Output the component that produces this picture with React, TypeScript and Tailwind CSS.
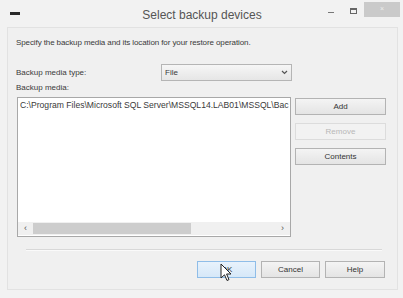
import React from "react";

const font = { fontFamily: '"Liberation Sans", Arial, sans-serif' };

const Btn = ({
  label,
  w = "w-[91px]",
  disabled = false,
  focus = false,
}: {
  label: string;
  w?: string;
  disabled?: boolean;
  focus?: boolean;
}) => (
  <div
    className={`${w} h-[17px] flex items-center justify-center text-[8px] border ${
      focus
        ? "border-[#8fbde8] bg-gradient-to-b from-[#e8f2fc] to-[#d6e8f8] text-[#333]"
        : disabled
        ? "border-[#dcdcdc] bg-[#f2f2f2] text-[#b8b8b8]"
        : "border-[#b3b3b3] bg-gradient-to-b from-[#f4f4f4] to-[#e4e4e4] text-[#333]"
    }`}
  >
    {label}
  </div>
);

export default function App() {
  return (
    <div
      className="w-[403px] h-[298px] bg-[#f2f2f2] flex flex-col overflow-hidden relative"
      style={font}
    >
      {/* title bar */}
      <div className="h-[27px] flex items-start shrink-0 relative">
        <div className="w-[10px] h-[3px] bg-[#2a2a2a] ml-[10px] mt-[12px]" />
        <div className="flex-1 text-center text-[12px] text-[#555] mt-[6px] pl-[56px]">
          Select backup devices
        </div>
        <div className="w-[6px] h-[1px] bg-[#777] mt-[12px]" />
        <div className="w-[7px] h-[6px] border border-[#666] border-t-2 ml-[16px] mt-[8px]" />
        <div className="w-[36px] h-[15px] bg-[#cacaca] ml-[7px] mt-[2px] mr-[3px] flex items-center justify-center text-[7px] text-[#eee]">
          ×
        </div>
      </div>

      {/* body */}
      <div className="flex-1 ml-[7px] mr-[5px] mb-[8px] bg-[#f0f0f0] border border-[#e2e2e2] flex flex-col pl-[8px] pr-[11px] text-[#3a3a3a]">
        <div className="text-[8px] leading-[10px] mt-[10px] tracking-[-0.1px]">
          Specify the backup media and its location for your restore operation.
        </div>

        <div className="flex items-center mt-[16px]">
          <div className="w-[145px] text-[8px]">Backup media type:</div>
          <div className="w-[131px] h-[17px] bg-gradient-to-b from-[#f6f6f6] to-[#e6e6e6] border border-[#b5b5b5] flex items-center justify-between px-[3px] text-[8px]">
            <span>File</span>
            <svg width="7" height="5" viewBox="0 0 7 5">
              <path d="M1 1 L3.5 3.5 L6 1" fill="none" stroke="#555" strokeWidth="1.2" />
            </svg>
          </div>
        </div>

        <div className="text-[8px] leading-[10px] mt-[2px]">Backup media:</div>

        <div className="flex mt-[4px] gap-[4px]">
          <div className="w-[276px] h-[140px] bg-white border border-[#a8a8a8] flex flex-col ml-[1px]">
            <div className="flex-1 text-[8.6px] leading-[10px] pl-[2px] pt-[2px] whitespace-nowrap overflow-hidden">
              C:\Program Files\Microsoft SQL Server\MSSQL14.LAB01\MSSQL\Bac
            </div>
            <div className="h-[13px] bg-[#f0f0f0] flex items-center mb-[1px]">
              <span className="w-[15px] text-center text-[9px] text-[#555]">‹</span>
              <div className="w-[158px] h-[11px] bg-[#cdcdcd]" />
              <div className="flex-1" />
              <span className="w-[15px] text-center text-[9px] text-[#555]">›</span>
            </div>
          </div>
          <div className="flex flex-col gap-[8px] mt-[1px]">
            <Btn label="Add" />
            <Btn label="Remove" disabled />
            <Btn label="Contents" />
          </div>
        </div>

        <div className="h-[2px] bg-[#d8d8d8] border-b border-[#fafafa] mt-[12px] ml-[10px] mr-[4px]" />

        <div className="flex justify-end gap-[5px] mt-[10px] mr-[1px]">
          <Btn label="OK" w="w-[59px]" focus />
          <Btn label="Cancel" w="w-[59px]" />
          <Btn label="Help" w="w-[60px]" />
        </div>
      </div>

      {/* mouse cursor over OK */}
      <svg
        className="absolute left-[220px] top-[263px]"
        width="13"
        height="19"
        viewBox="0 0 13 19"
      >
        <path
          d="M1 1 L1 15 L4.5 11.8 L7 17.5 L9 16.6 L6.6 11 L11 11 Z"
          fill="#fff"
          stroke="#222"
          strokeWidth="1"
          strokeLinejoin="round"
        />
      </svg>
    </div>
  );
}
